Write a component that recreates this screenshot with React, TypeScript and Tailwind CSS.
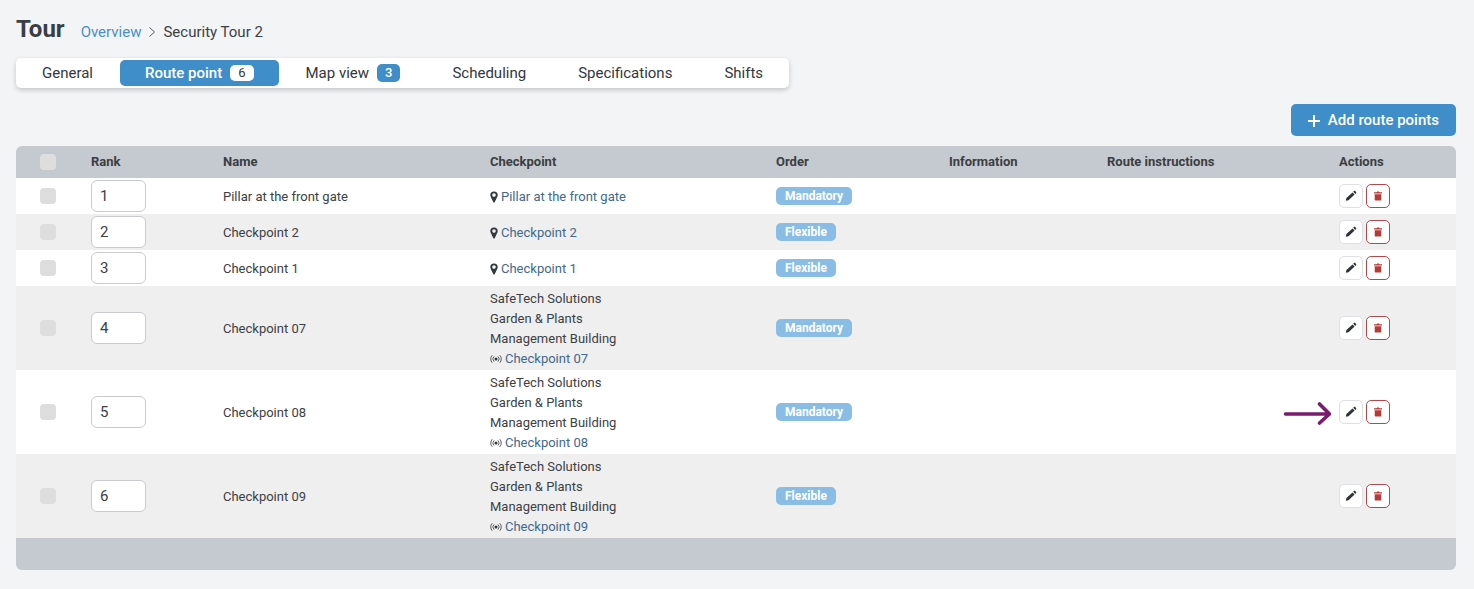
import { useState } from 'react';

type Order = 'Mandatory' | 'Flexible';

interface RoutePoint {
  rank: number;
  name: string;
  type: 'location' | 'nfc';
  site?: string[];
  order: Order;
  highlighted?: boolean;
}

interface Tab {
  label: string;
  count?: number;
}

const tabs: Tab[] = [
  { label: 'General' },
  { label: 'Route point', count: 6 },
  { label: 'Map view', count: 3 },
  { label: 'Scheduling' },
  { label: 'Specifications' },
  { label: 'Shifts' },
];

const site = ['SafeTech Solutions', 'Garden & Plants', 'Management Building'];

const routePoints: RoutePoint[] = [
  { rank: 1, name: 'Pillar at the front gate', type: 'location', order: 'Mandatory' },
  { rank: 2, name: 'Checkpoint 2', type: 'location', order: 'Flexible' },
  { rank: 3, name: 'Checkpoint 1', type: 'location', order: 'Flexible' },
  { rank: 4, name: 'Checkpoint 07', type: 'nfc', site, order: 'Mandatory' },
  { rank: 5, name: 'Checkpoint 08', type: 'nfc', site, order: 'Mandatory', highlighted: true },
  { rank: 6, name: 'Checkpoint 09', type: 'nfc', site, order: 'Flexible' },
];

function PinIcon() {
  return (
    <svg viewBox="0 0 8 12" className="h-3 w-2 shrink-0" fill="#34383d" aria-hidden="true">
      <path
        fillRule="evenodd"
        d="M4 .4a3.7 3.7 0 0 0-3.7 3.7c0 .6.1 1 .3 1.4L3.2 11c.3.7 1.3.7 1.6 0L7.4 5.5c.2-.4.3-.8.3-1.4A3.7 3.7 0 0 0 4 .4Zm0 1.9a1.8 1.8 0 1 1 0 3.600 1.8 1.8 0 0 1 0-3.600Z"
      />
    </svg>
  );
}

function SignalIcon() {
  return (
    <svg viewBox="0 0 12 10" className="h-2.5 w-3 shrink-0" fill="none" stroke="#4a4e53" strokeWidth="0.9" strokeLinecap="round" aria-hidden="true">
      <circle cx="6" cy="5" r="1.5" fill="#34383d" stroke="none" />
      <path d="M3.800 2.700a3.200 3.200 0 0 0 0 4.600M8.200 2.700a3.200 3.200 0 0 1 0 4.600M2 1.500a5 5 0 0 0 0 7M10 1.500a5 5 0 0 1 0 7" />
    </svg>
  );
}

function PencilIcon() {
  return (
    <svg viewBox="0 0 12 12" className="size-3" fill="#2f3338" aria-hidden="true">
      <path d="M.8 10.700l.6-2.800 6.100-5.500 2.100 2.200-6.100 5.600-2.700.5ZM8.200 1.800l.7-.7c.4-.4.9-.4 1.300 0l.8.8c.4.4.4.9 0 1.300l-.7.7-2.100-2.100Z" />
    </svg>
  );
}

function TrashIcon() {
  return (
    <svg viewBox="0 0 10 10" className="size-2.5" fill="#b53a3a" aria-hidden="true">
      <path d="M1 1.200h2.600l.5-.7h1.800l.5.7H9v1.200H1V1.200ZM1.700 3.200h6.600v5.300c0 .6-.4 1-1 1H2.700c-.6 0-1-.4-1-1V3.200Z" />
    </svg>
  );
}

function Arrow() {
  return (
    <svg
      viewBox="0 0 48 26"
      className="absolute right-full top-1/2 mr-2 h-[26px] w-12 -translate-y-1/2"
      fill="none"
      stroke="#7a1b6c"
      strokeWidth="3.6"
      strokeLinecap="round"
      strokeLinejoin="round"
      aria-hidden="true"
    >
      <path d="M2.500 15h43M36.500 5l10 10-10 9" />
    </svg>
  );
}

function Checkbox({ label }: { label: string }) {
  return (
    <input
      type="checkbox"
      aria-label={label}
      className="block size-4 appearance-none rounded-sm bg-[#dedede] checked:bg-[#3f8dc9]"
    />
  );
}

function RoutePointRow({ point }: { point: RoutePoint }) {
  return (
    <tr className="odd:bg-white even:bg-[#efefef]">
      <td className="pl-6">
        <Checkbox label={`Select ${point.name}`} />
      </td>
      <td className="px-2 py-0.5">
        <input
          type="text"
          defaultValue={point.rank}
          aria-label={`Rank of ${point.name}`}
          className="block h-8 w-[55px] rounded-md border border-[#c9cccf] bg-white px-2 text-[15px] text-[#3c4045]"
        />
      </td>
      <td className="px-2 pb-px pt-[3px]">{point.name}</td>
      <td className="px-2 pb-px pt-[3px]">
        {point.site?.map((line) => <div key={line}>{line}</div>)}
        <div className="flex items-center gap-[3px]">
          {point.type === 'location' ? <PinIcon /> : <SignalIcon />}
          <a href="#" className="text-[#41698c]">{point.name}</a>
        </div>
      </td>
      <td className="px-2">
        <span className="block w-fit rounded-[5px] bg-[#8abde6] px-[9px] text-[12px] font-bold leading-[18px] text-white">
          {point.order}
        </span>
      </td>
      <td />
      <td />
      <td className="px-2">
        <div className="relative flex gap-[3px]">
          {point.highlighted && <Arrow />}
          <button type="button" aria-label="Edit" className="flex size-6 items-center justify-center rounded-[5px] border border-[#dfe0e4] bg-white">
            <PencilIcon />
          </button>
          <button type="button" aria-label="Delete" className="flex size-6 items-center justify-center rounded-[5px] border border-[#b04a4e] bg-white">
            <TrashIcon />
          </button>
        </div>
      </td>
    </tr>
  );
}

export default function App() {
  const [active, setActive] = useState('Route point');

  return (
    <main className="min-h-screen bg-[#f2f4f6] pb-5 pl-4 pr-[18px] pt-3.5 font-[Roboto,'Liberation_Sans',sans-serif] text-[#3c4045]">
      <header className="flex items-baseline gap-4">
        <h1 className="text-[24px] font-bold leading-[30px] text-[#3a3e42]">Tour</h1>
        <nav aria-label="Breadcrumb" className="flex items-baseline gap-2 text-[15px]">
          <a href="#" className="text-[#4a8fc7]">Overview</a>
          <svg viewBox="0 0 6 10" className="h-2.5 w-1.5" fill="none" stroke="#5b5f64" aria-hidden="true">
            <path d="M.5.5 5.500 5 .5 9.500" />
          </svg>
          <span>Security Tour 2</span>
        </nav>
      </header>

      <div className="mt-3.5 flex">
        <nav className="flex gap-0.5 rounded-[5px] bg-white px-px py-0.5 text-[15px] shadow-[0_2px_5px_rgba(0,0,0,0.2)]">
          {tabs.map((tab) => {
            const selected = tab.label === active;
            return (
              <button
                key={tab.label}
                type="button"
                onClick={() => setActive(tab.label)}
                className={`flex h-[26px] items-center gap-2 rounded-[5px] px-[25px] ${selected ? 'bg-[#3f8dc9] font-medium text-white' : 'text-[#33373b]'}`}
              >
                {tab.label}
                {tab.count !== undefined && (
                  <span
                    className={`rounded-[5px] px-2 text-[13px] ${selected ? 'bg-white font-normal leading-4 text-[#33373b]' : 'bg-[#3f8dc9] font-medium leading-[18px] text-white'}`}
                  >
                    {tab.count}
                  </span>
                )}
              </button>
            );
          })}
        </nav>
      </div>

      <div className="mt-4 flex justify-end">
        <button type="button" className="flex h-8 items-center gap-2 rounded-[5px] bg-[#3f8dc9] px-[17px] pt-px text-[15px] font-medium text-white">
          <svg viewBox="0 0 12 12" className="size-3" fill="none" stroke="currentColor" strokeWidth="2" aria-hidden="true">
            <path d="M6 0v12M0 6h12" />
          </svg>
          Add route points
        </button>
      </div>

      <div className="mt-2.5 overflow-hidden rounded-md">
        <table className="w-full table-fixed text-left text-[13px] leading-5">
          <thead className="bg-[#c5c9d0] text-[#3a3e42]">
            <tr className="h-8">
              <th className="w-[67px] pl-6">
                <Checkbox label="Select all" />
              </th>
              <th className="w-[132px] px-2">Rank</th>
              <th className="w-[267px] px-2">Name</th>
              <th className="w-[286px] px-2">Checkpoint</th>
              <th className="w-[173px] px-2">Order</th>
              <th className="w-[158px] px-2">Information</th>
              <th className="w-[232px] px-2">Route instructions</th>
              <th className="w-[125px] px-2">Actions</th>
            </tr>
          </thead>
          <tbody>
            {routePoints.map((point) => <RoutePointRow key={point.rank} point={point} />)}
          </tbody>
          <tfoot className="bg-[#c5c9d0]">
            <tr className="h-8">
              <td colSpan={8} />
            </tr>
          </tfoot>
        </table>
      </div>
    </main>
  );
}
